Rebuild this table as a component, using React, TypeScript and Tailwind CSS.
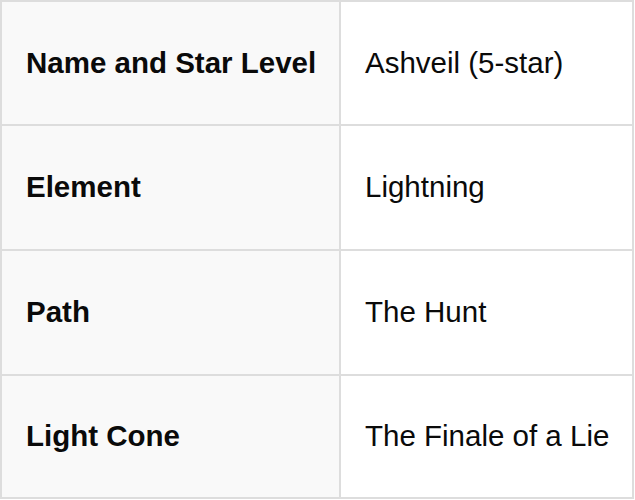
const rows: { label: string; value: string; h: string }[] = [
  { label: 'Name and Star Level', value: 'Ashveil (5-star)', h: 'h-[124px]' },
  { label: 'Element', value: 'Lightning', h: 'h-[125px]' },
  { label: 'Path', value: 'The Hunt', h: 'h-[125px]' },
  { label: 'Light Cone', value: 'The Finale of a Lie', h: 'h-[123px]' },
];

export default function App() {
  return (
    <div className="bg-white" style={{ fontFamily: '"Liberation Sans", Arial, sans-serif' }}>
      <table className="w-[634px] border-collapse border-2 border-[#dddddd] text-[29.5px] text-[#0a0a0a]">
        <tbody>
          {rows.map((r) => (
            <tr key={r.label} className={r.h}>
              <th className="w-[339px] whitespace-nowrap border-2 border-[#dddddd] bg-[#f9f9f9] pl-6 pr-5 text-left font-bold">
                {r.label}
              </th>
              <td className="whitespace-nowrap border-2 border-[#dddddd] bg-white pl-6 pr-5 text-left">{r.value}</td>
            </tr>
          ))}
        </tbody>
      </table>
    </div>
  );
}
